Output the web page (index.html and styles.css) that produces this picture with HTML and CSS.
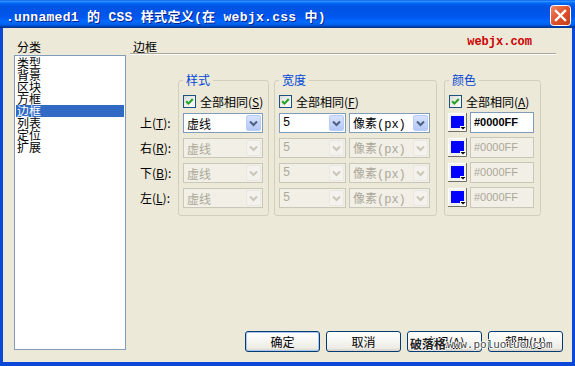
FILE: index.html
```html
<!DOCTYPE html>
<html lang="zh-CN">
<head>
  <meta charset="UTF-8">
  <title>.unnamed1 的 CSS 样式定义</title>
  <link rel="stylesheet" href="styles.css">
</head>
<body>
  <div class="window">
    <div class="titlebar">
      <span class="title">.unnamed1 的 CSS 样式定义(在 webjx.css 中)</span>
      <button class="close" type="button" aria-label="关闭">
        <svg width="21" height="21" viewBox="0 0 21 21">
          <defs>
            <linearGradient id="closeBg" x1="0" y1="0" x2="1" y2="1">
              <stop offset="0" stop-color="#F08A6A"/>
              <stop offset="0.5" stop-color="#E0512C"/>
              <stop offset="1" stop-color="#C13B14"/>
            </linearGradient>
          </defs>
          <rect x="0.5" y="0.5" width="20" height="20" rx="3" fill="url(#closeBg)" stroke="#fff"/>
          <path d="M6 6 L15 15 M15 6 L6 15" stroke="#fff" stroke-width="2.4" stroke-linecap="square"/>
        </svg>
      </button>
    </div>

    <div class="client">
      <div class="sidebar">
        <div class="side-label">分类</div>
        <ul class="category-list">
          <li>类型</li>
          <li>背景</li>
          <li>区块</li>
          <li>方框</li>
          <li class="selected">边框</li>
          <li>列表</li>
          <li>定位</li>
          <li>扩展</li>
        </ul>
      </div>

      <div class="panel">
        <div class="panel-head">
          <span class="panel-title">边框</span>
          <span class="brand">webjx.com</span>
        </div>

        <div class="controls">
          <div class="row-labels">
            <div class="row-label">上(<u>T</u>):</div>
            <div class="row-label">右(<u>R</u>):</div>
            <div class="row-label">下(<u>B</u>):</div>
            <div class="row-label">左(<u>L</u>):</div>
          </div>

          <fieldset class="group g-style">
            <legend>样式</legend>
            <div class="same">
              <span class="check"><svg width="11" height="11" viewBox="0 0 11 11"><path d="M2.2 5.2 L4.4 7.6 L8.8 3" stroke="#21A121" stroke-width="2" fill="none"/></svg></span>
              <span>全部相同(<u>S</u>)</span>
            </div>
            <div class="rows">
              <div class="combo c-style"><span>虚线</span><span class="arrow"><svg width="15" height="16" viewBox="0 0 15 16"><path d="M4 6.5 L7.5 10 L11 6.5" stroke="#4D6185" stroke-width="2" fill="none"/></svg></span></div>
              <div class="combo c-style off"><span>虚线</span><span class="arrow"><svg width="15" height="16" viewBox="0 0 15 16"><path d="M4 6.5 L7.5 10 L11 6.5" stroke="#C9C7BA" stroke-width="2" fill="none"/></svg></span></div>
              <div class="combo c-style off"><span>虚线</span><span class="arrow"><svg width="15" height="16" viewBox="0 0 15 16"><path d="M4 6.5 L7.5 10 L11 6.5" stroke="#C9C7BA" stroke-width="2" fill="none"/></svg></span></div>
              <div class="combo c-style off"><span>虚线</span><span class="arrow"><svg width="15" height="16" viewBox="0 0 15 16"><path d="M4 6.5 L7.5 10 L11 6.5" stroke="#C9C7BA" stroke-width="2" fill="none"/></svg></span></div>
            </div>
          </fieldset>

          <fieldset class="group g-width">
            <legend>宽度</legend>
            <div class="same">
              <span class="check"><svg width="11" height="11" viewBox="0 0 11 11"><path d="M2.2 5.2 L4.4 7.6 L8.8 3" stroke="#21A121" stroke-width="2" fill="none"/></svg></span>
              <span>全部相同(<u>F</u>)</span>
            </div>
            <div class="rows">
              <div class="pair">
                <div class="combo c-num"><span class="latin">5</span><span class="arrow"><svg width="15" height="16" viewBox="0 0 15 16"><path d="M4 6.5 L7.5 10 L11 6.5" stroke="#4D6185" stroke-width="2" fill="none"/></svg></span></div>
                <div class="combo c-unit"><span>像素<span class="latin">(px)</span></span><span class="arrow"><svg width="15" height="16" viewBox="0 0 15 16"><path d="M4 6.5 L7.5 10 L11 6.5" stroke="#4D6185" stroke-width="2" fill="none"/></svg></span></div>
              </div>
              <div class="pair">
                <div class="combo c-num off"><span class="latin">5</span><span class="arrow"><svg width="15" height="16" viewBox="0 0 15 16"><path d="M4 6.5 L7.5 10 L11 6.5" stroke="#C9C7BA" stroke-width="2" fill="none"/></svg></span></div>
                <div class="combo c-unit off"><span>像素<span class="latin">(px)</span></span><span class="arrow"><svg width="15" height="16" viewBox="0 0 15 16"><path d="M4 6.5 L7.5 10 L11 6.5" stroke="#C9C7BA" stroke-width="2" fill="none"/></svg></span></div>
              </div>
              <div class="pair">
                <div class="combo c-num off"><span class="latin">5</span><span class="arrow"><svg width="15" height="16" viewBox="0 0 15 16"><path d="M4 6.5 L7.5 10 L11 6.5" stroke="#C9C7BA" stroke-width="2" fill="none"/></svg></span></div>
                <div class="combo c-unit off"><span>像素<span class="latin">(px)</span></span><span class="arrow"><svg width="15" height="16" viewBox="0 0 15 16"><path d="M4 6.5 L7.5 10 L11 6.5" stroke="#C9C7BA" stroke-width="2" fill="none"/></svg></span></div>
              </div>
              <div class="pair">
                <div class="combo c-num off"><span class="latin">5</span><span class="arrow"><svg width="15" height="16" viewBox="0 0 15 16"><path d="M4 6.5 L7.5 10 L11 6.5" stroke="#C9C7BA" stroke-width="2" fill="none"/></svg></span></div>
                <div class="combo c-unit off"><span>像素<span class="latin">(px)</span></span><span class="arrow"><svg width="15" height="16" viewBox="0 0 15 16"><path d="M4 6.5 L7.5 10 L11 6.5" stroke="#C9C7BA" stroke-width="2" fill="none"/></svg></span></div>
              </div>
            </div>
          </fieldset>

          <fieldset class="group g-color">
            <legend>颜色</legend>
            <div class="same">
              <span class="check"><svg width="11" height="11" viewBox="0 0 11 11"><path d="M2.2 5.2 L4.4 7.6 L8.8 3" stroke="#21A121" stroke-width="2" fill="none"/></svg></span>
              <span>全部相同(<u>A</u>)</span>
            </div>
            <div class="rows">
              <div class="pair">
                <span class="swatch"><svg width="19" height="19" viewBox="0 0 19 19"><path d="M0.5 18 V0.5 H18" stroke="#fff" fill="none"/><path d="M18.5 0 V18.5 H0" stroke="#716F64" fill="none"/><rect x="3" y="3" width="13" height="12" fill="#0000FF"/><rect x="12" y="13" width="6" height="5" fill="#fff"/><path d="M12.5 14 H17.5 L15 16.5 Z" fill="#000"/></svg></span>
                <span class="hex">#0000FF</span>
              </div>
              <div class="pair">
                <span class="swatch"><svg width="19" height="19" viewBox="0 0 19 19"><path d="M0.5 18 V0.5 H18" stroke="#fff" fill="none"/><path d="M18.5 0 V18.5 H0" stroke="#716F64" fill="none"/><rect x="3" y="3" width="13" height="12" fill="#0000FF"/><rect x="12" y="13" width="6" height="5" fill="#fff"/><path d="M12.5 14 H17.5 L15 16.5 Z" fill="#000"/></svg></span>
                <span class="hex off">#0000FF</span>
              </div>
              <div class="pair">
                <span class="swatch"><svg width="19" height="19" viewBox="0 0 19 19"><path d="M0.5 18 V0.5 H18" stroke="#fff" fill="none"/><path d="M18.5 0 V18.5 H0" stroke="#716F64" fill="none"/><rect x="3" y="3" width="13" height="12" fill="#0000FF"/><rect x="12" y="13" width="6" height="5" fill="#fff"/><path d="M12.5 14 H17.5 L15 16.5 Z" fill="#000"/></svg></span>
                <span class="hex off">#0000FF</span>
              </div>
              <div class="pair">
                <span class="swatch"><svg width="19" height="19" viewBox="0 0 19 19"><path d="M0.5 18 V0.5 H18" stroke="#fff" fill="none"/><path d="M18.5 0 V18.5 H0" stroke="#716F64" fill="none"/><rect x="3" y="3" width="13" height="12" fill="#0000FF"/><rect x="12" y="13" width="6" height="5" fill="#fff"/><path d="M12.5 14 H17.5 L15 16.5 Z" fill="#000"/></svg></span>
                <span class="hex off">#0000FF</span>
              </div>
            </div>
          </fieldset>
        </div>

        <div class="buttons">
          <button type="button" class="btn default">确定</button>
          <button type="button" class="btn">取消</button>
          <button type="button" class="btn">应用(<u>A</u>)</button>
          <button type="button" class="btn">帮助(<u>H</u>)</button>
        </div>
      </div>
    </div>

    <div class="watermark"><b>破落格</b><span>www.poluoluo.com</span></div>
  </div>
</body>
</html>
```

FILE: styles.css
```css
* {
  box-sizing: border-box;
}
body {
  margin: 0;
  font-family: "Noto Sans CJK SC", "Liberation Sans", sans-serif;
  font-size: 12px;
  color: #000;
  background: #ECE9D8;
}
u {
  text-decoration: underline;
}
.latin {
  font-family: "Liberation Mono", monospace;
}

.window {
  position: relative;
  width: 575px;
  height: 366px;
  display: flex;
  flex-direction: column;
  background: #0B48D8;
}
.titlebar {
  height: 28px;
  flex: none;
  display: flex;
  align-items: center;
  justify-content: space-between;
  padding: 3px 4px 0 6px;
  background: linear-gradient(to bottom, #0058EE 0%, #3593FF 4%, #288EFF 6%, #127DFF 8%, #036FFC 10%, #0262EE 14%, #0057E5 20%, #0054E3 24%, #0055EB 56%, #005BF5 66%, #026AFE 76%, #0062EF 86%, #0052D6 92%, #0040AB 94%, #003092 100%);
}
.title {
  color: #fff;
  font-family: "Liberation Mono", "Noto Sans CJK SC", monospace;
  font-weight: bold;
  font-size: 13px;
  letter-spacing: 0.3px;
  text-shadow: 1px 1px 0 #0A1E8C;
  white-space: nowrap;
}
.close {
  width: 21px;
  height: 21px;
  padding: 0;
  border: none;
  background: none;
  margin-top: -1px;
}
.close svg {
  display: block;
}

.client {
  flex: 1;
  margin: 0 3px 4px;
  background: #ECE9D8;
  display: flex;
  gap: 4px;
  padding: 12px 6px 10px 11px;
}

.sidebar {
  width: 112px;
  display: flex;
  flex-direction: column;
}
.side-label {
  padding-left: 3px;
  height: 15px;
  line-height: 14px;
}
.category-list {
  list-style: none;
  flex: 1;
  margin: 0 0 2px;
  padding: 1px;
  background: #fff;
  border: 1px solid #7F9DB9;
}
.category-list li {
  height: 12px;
  line-height: 12px;
  padding-left: 1px;
  white-space: nowrap;
}
.category-list li.selected {
  background: #316AC5;
  color: #fff;
}

.panel {
  flex: 1;
  display: flex;
  flex-direction: column;
}
.panel-head {
  display: flex;
  justify-content: space-between;
  align-items: flex-start;
  height: 14px;
  margin-right: 10px;
  padding: 0 24px 0 3px;
  border-bottom: 1px solid #ACA899;
  box-shadow: 0 1px 0 #fff;
}
.panel-title {
  line-height: 13px;
}
.brand {
  margin-top: -4px;
  line-height: 12px;
  color: #CC0000;
  font-family: "Liberation Mono", monospace;
  font-weight: bold;
  font-size: 12px;
}

.controls {
  display: flex;
  align-items: flex-start;
  margin-top: 19px;
  padding-left: 10px;
}
.row-labels {
  width: 38px;
  margin-top: 40px;
  display: flex;
  flex-direction: column;
  gap: 5px;
}
.row-label {
  height: 20px;
  line-height: 20px;
  white-space: nowrap;
}

.group {
  margin: 0;
  min-width: 0;
  padding: 8px 6px 7px 4px;
  border: 1px solid #D0D0BF;
  border-radius: 3px;
  display: flex;
  flex-direction: column;
}
.group legend {
  padding: 0 3px;
  line-height: 14px;
  color: #0046D5;
}
.g-style {
  width: 91px;
}
.g-width {
  width: 163px;
  margin-left: 5px;
}
.g-color {
  width: 97px;
  margin-left: 7px;
}

.same {
  display: flex;
  align-items: center;
  gap: 4px;
  height: 13px;
  line-height: 13px;
  white-space: nowrap;
}
.check {
  width: 13px;
  height: 13px;
  flex: none;
  border: 1px solid #1C5180;
  background: linear-gradient(135deg, #DCDCD7, #fff);
}
.check svg {
  display: block;
}

.rows {
  margin-top: 5px;
  display: flex;
  flex-direction: column;
  gap: 5px;
}
.pair {
  display: flex;
  gap: 3px;
  height: 20px;
}
.combo {
  height: 20px;
  display: flex;
  align-items: center;
  justify-content: space-between;
  padding: 1px 1px 1px 3px;
  border: 1px solid #7F9DB9;
  background: #fff;
  white-space: nowrap;
}
.c-style {
  width: 80px;
}
.c-num {
  width: 67px;
}
.c-unit {
  width: 81px;
}
.arrow {
  width: 15px;
  height: 16px;
  flex: none;
  border: 1px solid #B9CCF8;
  border-radius: 2px;
  background: linear-gradient(to bottom, #D7E2FD, #B4C8F6);
}
.arrow svg {
  display: block;
  margin: -1px 0 0 -1px;
}
.combo.off {
  border-color: #C9C7BA;
  background: #F1EFE6;
  color: #ACA899;
}
.combo.off .arrow {
  border-color: #E9E7DF;
  background: #F3F2EC;
}

.swatch {
  width: 19px;
  height: 19px;
  flex: none;
  margin-left: -1px;
  background: #F1F0EA;
}
.swatch svg {
  display: block;
}
.hex {
  width: 65px;
  height: 21px;
  margin-top: -1px;
  padding-left: 3px;
  line-height: 19px;
  border: 1px solid #7F9DB9;
  background: #fff;
  font-family: "Liberation Sans", sans-serif;
  font-weight: bold;
  font-size: 11px;
}
.hex.off {
  border-color: #C9C7BA;
  background: #F1EFE6;
  color: #ACA899;
  font-weight: normal;
}

.buttons {
  margin-top: auto;
  display: flex;
  justify-content: flex-end;
  gap: 6px;
  padding-right: 3px;
}
.btn {
  width: 75px;
  height: 21px;
  padding: 0;
  font-family: inherit;
  font-size: 12px;
  color: #000;
  border: 1px solid #003C74;
  border-radius: 3px;
  background: linear-gradient(to bottom, #FFFFFF 0%, #F5F5F1 50%, #ECEBE5 85%, #D6D0C5 100%);
}
.btn.default {
  box-shadow: inset 0 0 0 1px #A8C4F1;
}

.watermark {
  position: absolute;
  left: 410px;
  top: 336px;
  display: flex;
  align-items: flex-end;
  gap: 1px;
  white-space: nowrap;
  text-shadow: -1px 0 #fff, 1px 0 #fff, 0 -1px #fff, 0 1px #fff;
}
.watermark b {
  font-size: 12px;
  line-height: 16px;
  color: #222;
}
.watermark span {
  font-family: "Liberation Mono", monospace;
  font-size: 11px;
  line-height: 14px;
  color: #444;
}
```
